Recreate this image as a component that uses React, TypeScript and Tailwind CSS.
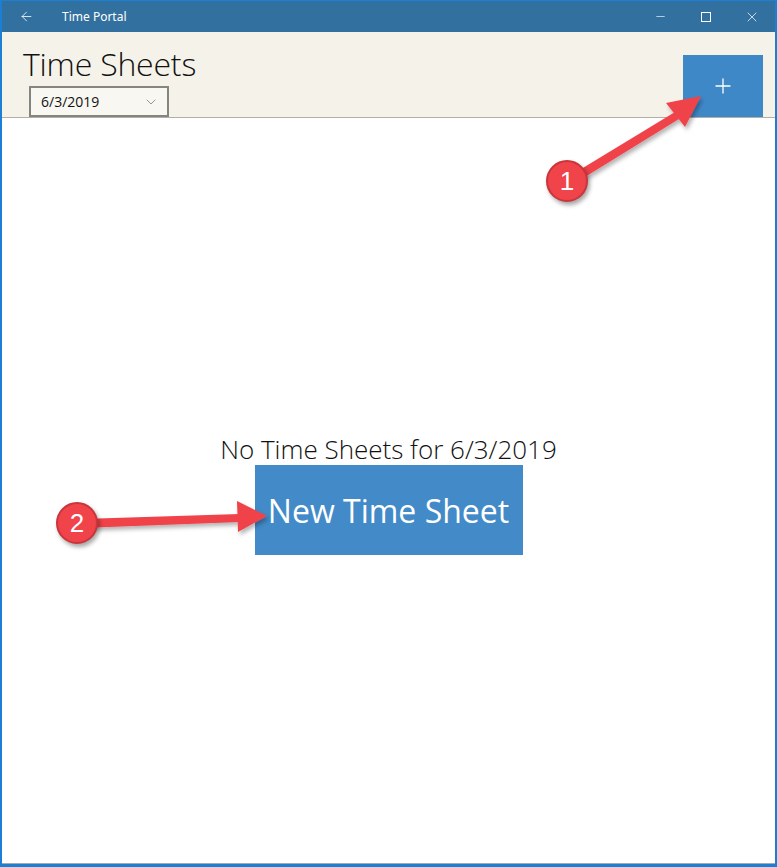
import { ArrowLeft, ChevronDown, Minus, Plus, X } from 'lucide-react';

const FONT = { fontFamily: '"Open Sans", "Noto Sans", sans-serif' };

function Badge({ n }: { n: string }) {
  return (
    <div
      className="w-[42px] h-[42px] rounded-full bg-[#f0434a] border-2 border-[#c9353a] flex items-center justify-center text-white text-[26px] shadow-[2px_3px_4px_rgba(0,0,0,0.35)]"
      style={{ fontFamily: '"Liberation Sans", Arial, sans-serif' }}
    >
      {n}
    </div>
  );
}

/** 红色标注箭头 —— 覆盖在页面上方 */
function Annotations() {
  return (
    <>
      <svg className="absolute left-0 top-0 pointer-events-none" width="777" height="867">
        <defs>
          <filter id="sh" x="-20%" y="-20%" width="140%" height="140%">
            <feDropShadow dx="2" dy="3" stdDeviation="2" floodColor="#000" floodOpacity="0.3" />
          </filter>
        </defs>
        <g fill="#f0434a" filter="url(#sh)">
          {/* arrow 1 */}
          <polygon points="566,176 673,111 677,118 570,184" />
          <polygon points="664,102 699,95 683,126" />
          {/* arrow 2 */}
          <polygon points="80,518 238,513 238,521 80,527" />
          <polygon points="235,500 265,515 236,531" />
        </g>
      </svg>
      <div className="absolute left-[544px] top-[159px]">
        <Badge n="1" />
      </div>
      <div className="absolute left-[54px] top-[501px]">
        <Badge n="2" />
      </div>
    </>
  );
}

export default function App() {
  return (
    <div
      className="relative w-[777px] h-[867px] flex flex-col bg-white border-x-2 border-b-[3px] border-t border-[#1c7fd6] overflow-hidden"
      style={FONT}
    >
      {/* 标题栏 */}
      <div className="h-[31px] flex-none flex items-center bg-[#32709f] text-white">
        <div className="w-[48px] flex justify-center">
          <ArrowLeft className="w-[15px] h-[15px]" strokeWidth={1.3} />
        </div>
        <span className="ml-[12px] text-[12px]" style={{ fontFamily: '"Noto Sans", sans-serif' }}>
          Time Portal
        </span>
        <div className="ml-auto flex h-full">
          <div className="w-[46px] flex items-center justify-center">
            <Minus className="w-[13px] h-[13px]" strokeWidth={1.2} />
          </div>
          <div className="w-[46px] flex items-center justify-center">
            <div className="w-[10px] h-[10px] border border-white" />
          </div>
          <div className="w-[46px] flex items-center justify-center">
            <X className="w-[16px] h-[16px]" strokeWidth={1.1} />
          </div>
        </div>
      </div>

      {/* 头部 */}
      <div className="h-[86px] flex-none flex bg-[#f5f2ea] border-b border-[#b3aea6]">
        <div className="pl-[21px] flex flex-col">
          <h1 className="text-[32px] font-light leading-none text-[#111] mt-[16px] tracking-[-0.2px]">
            Time Sheets
          </h1>
          <div className="mt-[6px] ml-[6px] w-[140px] h-[31px] border-2 border-[#85847f] bg-[#f8f7f2] flex items-center pl-[10px] pr-[8px] text-[14px] text-[#111]">
            6/3/2019
            <ChevronDown className="ml-auto w-[16px] h-[16px] text-[#666]" strokeWidth={1} />
          </div>
        </div>
        <div className="ml-auto mr-[12px] mt-[23px] w-[80px] h-[62px] bg-[#3f88c8] flex items-center justify-center">
          <Plus className="w-[24px] h-[24px] text-white" strokeWidth={1.3} />
        </div>
      </div>

      {/* 内容 */}
      <div className="flex-1 flex flex-col items-center justify-center pt-[6px]">
        <p className="text-[26px] font-light leading-[32px] text-[#111]">
          No Time Sheets for 6/3/2019
        </p>
        <button className="w-[268px] h-[90px] bg-[#428ac8] text-white text-[32px] flex items-center justify-center pt-[2px]">
          New Time Sheet
        </button>
      </div>
      <div className="h-px bg-[#a8a8a8] flex-none" />

      <Annotations />
    </div>
  );
}
